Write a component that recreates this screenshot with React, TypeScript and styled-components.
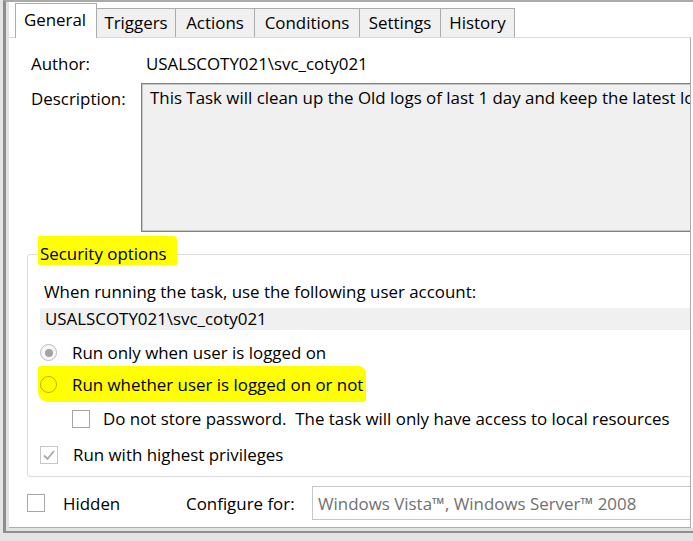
import React from 'react';
import styled, { createGlobalStyle, css } from 'styled-components';

const GlobalStyle = createGlobalStyle`
  html, body {
    margin: 0;
    padding: 0;
    background: #e4e4e4;
  }

  body {
    font-family: 'Open Sans', 'Noto Sans', sans-serif;
    font-size: 16.9px;
    color: #000;
  }
`;

const Page = styled.div`
  width: 693px;
  height: 541px;
  padding-left: 3px;
  box-sizing: border-box;
  overflow: hidden;
  background: #e4e4e4;
`;

const Frame = styled.div`
  height: 533px;
  box-sizing: border-box;
  border-left: 3px solid #8e8e8e;
  border-top: 2px solid #aaaaaa;
  border-bottom: 2px solid #8e8e8e;
  padding: 0 0 3px 3px;
  background: #e2e2e2;
  display: flex;
`;

const Sheet = styled.div`
  flex: 1;
  display: flex;
  flex-direction: column;
  background: #fff;
  min-width: 0;
`;

const TabStrip = styled.div`
  display: flex;
  align-items: flex-end;
  height: 35px;
  flex: none;
  padding-left: 7px;
  position: relative;
  z-index: 1;
`;

const Tab = styled.div<{ $active?: boolean; $w: number }>`
  width: ${(p) => p.$w}px;
  height: 29px;
  box-sizing: border-box;
  margin-left: -1px;
  padding-bottom: 2px;
  border: 1px solid #acacac;
  border-bottom: none;
  background: #f0f0f0;
  display: flex;
  align-items: center;
  justify-content: center;
  white-space: nowrap;

  ${(p) => p.$active && css`
    height: 35px;
    margin-bottom: -1px;
    background: #fff;
    padding: 0 2px 4px 0;
  `}
`;

const Panel = styled.div`
  flex: 1;
  display: flex;
  flex-direction: column;
  margin-right: 2px;
  padding-left: 18px;
  background: #fff;
  border-top: 1px solid #d9d9d9;
  border-right: 1px solid #acacac;
  border-bottom: 1px solid #acacac;
  overflow: hidden;
`;

const FieldRow = styled.div<{ $top: number }>`
  display: flex;
  align-items: flex-start;
  margin-top: ${(p) => p.$top}px;
  padding-left: 4px;
  white-space: nowrap;
`;

const Label = styled.div<{ $w: number; $pad?: number }>`
  flex: none;
  width: ${(p) => p.$w}px;
  padding-top: ${(p) => p.$pad || 0}px;
  line-height: 24px;
`;

const Value = styled.div`
  line-height: 24px;
`;

const TextBox = styled.div`
  flex: none;
  width: 620px;
  height: 149px;
  box-sizing: border-box;
  padding: 2px 8px;
  line-height: 24px;
  background: #f0f0f0;
  border: 1px solid #7f7f7f;
  box-shadow: inset 0 0 0 1px #c8c8c8;
  overflow: hidden;
`;

const Group = styled.fieldset`
  margin: 11px -40px 0 0;
  padding: 0 0 5px 12px;
  min-width: 0;
  border: 1px solid #dcdcdc;
  border-radius: 3px;
  white-space: nowrap;
`;

const Legend = styled.legend`
  padding: 0;
  line-height: 22px;
`;

const Marker = styled.span`
  background: #ffff00;
  margin-left: -2px;
  padding: 6px 10px 0 2px;
  border-radius: 1px 4px 1px 2px;
`;

const Prompt = styled.div`
  margin-top: 16px;
  padding-left: 4px;
  line-height: 22px;
`;

const Account = styled.div`
  margin-top: 5px;
  height: 22px;
  line-height: 22px;
  padding-left: 5px;
  background: #f0f0f0;
`;

const Option = styled.div<{ $indent?: number; $top?: number; $gap?: number; $marked?: boolean }>`
  display: flex;
  align-items: center;
  gap: ${(p) => p.$gap ?? 15}px;
  height: 33px;
  margin-top: ${(p) => p.$top || 0}px;
  padding-left: ${(p) => p.$indent || 0}px;

  ${(p) => p.$marked && css`
    width: fit-content;
    height: 36px;
    margin-top: -3px;
    margin-left: -2px;
    padding-left: 2px;
    padding-right: 3px;
    background: #ffff00;
    border-radius: 2px 8px 3px 10px;
  `}
`;

const Radio = styled.span<{ $muted?: boolean }>`
  flex: none;
  width: 17px;
  height: 17px;
  box-sizing: border-box;
  border-radius: 50%;
  border: 1px solid ${(p) => (p.$muted ? '#bcbcbc' : 'rgba(0, 0, 0, 0.3)')};
  background: ${(p) => (p.$muted ? '#f7f7f7' : 'transparent')};
  display: flex;
  align-items: center;
  justify-content: center;
`;

const Dot = styled.span`
  width: 8px;
  height: 8px;
  border-radius: 50%;
  background: #a3a3a3;
`;

const Box = styled.span<{ $muted?: boolean }>`
  flex: none;
  width: 18px;
  height: 18px;
  box-sizing: border-box;
  border: 1px solid ${(p) => (p.$muted ? '#c6c6c6' : '#a6a6a6')};
  background: #fff;
  display: flex;
  align-items: center;
  justify-content: center;
`;

const Footer = styled.div`
  display: flex;
  align-items: center;
  height: 34px;
  margin-top: 9px;
  white-space: nowrap;
`;

const FooterText = styled.div<{ $w: number; $left?: number }>`
  flex: none;
  width: ${(p) => p.$w}px;
  margin-left: ${(p) => p.$left || 0}px;
`;

const Combo = styled.div`
  flex: none;
  width: 400px;
  height: 34px;
  box-sizing: border-box;
  padding-left: 5px;
  display: flex;
  align-items: center;
  color: #707070;
  border: 1px solid #c6c6c6;
  background: #fff;
`;

const tabs = [
  { name: 'General', w: 82 },
  { name: 'Triggers', w: 80 },
  { name: 'Actions', w: 80 },
  { name: 'Conditions', w: 106 },
  { name: 'Settings', w: 82 },
  { name: 'History', w: 75 },
];

const Check = () => (
  <svg width="14" height="14" viewBox="0 0 14 14">
    <path d="M2 7.5 L5.5 11 L12 3" fill="none" stroke="#a8a8a8" strokeWidth="1.8" />
  </svg>
);

export default function App() {
  return (
    <Page>
      <GlobalStyle />
      <Frame>
        <Sheet>
          <TabStrip>
            {tabs.map((t, i) => (
              <Tab key={t.name} $w={t.w} $active={i === 0}>{t.name}</Tab>
            ))}
          </TabStrip>
          <Panel>
            <FieldRow $top={14}>
              <Label $w={115}>Author:</Label>
              <Value>USALSCOTY021\svc_coty021</Value>
            </FieldRow>
            <FieldRow $top={7}>
              <Label $w={110} $pad={4}>Description:</Label>
              <TextBox>This Task will clean up the Old logs of last 1 day and keep the latest logs</TextBox>
            </FieldRow>

            <Group>
              <Legend><Marker>Security options</Marker></Legend>
              <Prompt>When running the task, use the following user account:</Prompt>
              <Account>USALSCOTY021\svc_coty021</Account>
              <Option $top={6}>
                <Radio $muted><Dot /></Radio>
                Run only when user is logged on
              </Option>
              <Option $marked>
                <Radio />
                Run whether user is logged on or not
              </Option>
              <Option $indent={32} $gap={13}>
                <Box />
                Do not store password.&nbsp; The task will only have access to local resources
              </Option>
              <Option $top={3}>
                <Box $muted><Check /></Box>
                Run with highest privileges
              </Option>
            </Group>

            <Footer>
              <Box />
              <FooterText $w={123} $left={18}>Hidden</FooterText>
              <FooterText $w={126}>Configure for:</FooterText>
              <Combo>Windows Vista™, Windows Server™ 2008</Combo>
            </Footer>
          </Panel>
        </Sheet>
      </Frame>
    </Page>
  );
}
